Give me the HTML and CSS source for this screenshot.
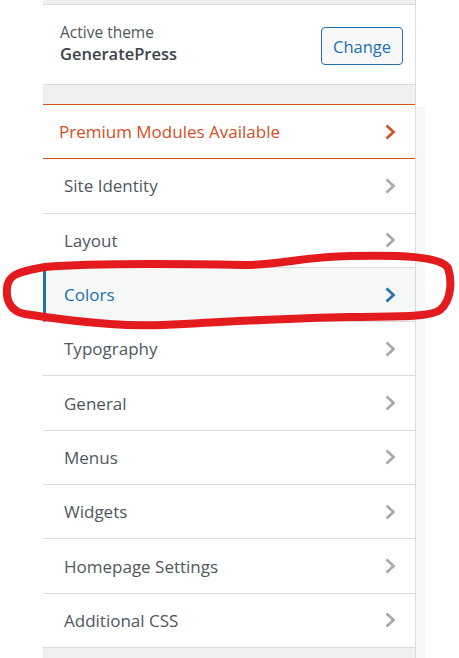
FILE: index.html
```html
<!DOCTYPE html>
<html>
<head>
<meta charset="utf-8">
<link rel="stylesheet" href="styles.css">
</head>
<body>
<div class="wrap">
  <div class="panel">
    <div class="top-gap"></div>
    <div class="theme-info">
      <div class="theme-text">
        <div class="theme-label">Active theme</div>
        <div class="theme-name">GeneratePress</div>
      </div>
      <button class="change-btn">Change</button>
    </div>
    <div class="gap"></div>
    <ul class="sections">
      <li class="row premium"><span>Premium Modules Available</span><svg class="chev" viewBox="0 0 10 16"><path d="M1.5 1.5 L8.5 8 L1.5 14.5"/></svg></li>
      <li class="row"><span>Site Identity</span><svg class="chev" viewBox="0 0 10 16"><path d="M1.5 1.5 L8.5 8 L1.5 14.5"/></svg></li>
      <li class="row"><span>Layout</span><svg class="chev" viewBox="0 0 10 16"><path d="M1.5 1.5 L8.5 8 L1.5 14.5"/></svg></li>
      <li class="row active"><span>Colors</span><svg class="chev" viewBox="0 0 10 16"><path d="M1.5 1.5 L8.5 8 L1.5 14.5"/></svg></li>
      <li class="row"><span>Typography</span><svg class="chev" viewBox="0 0 10 16"><path d="M1.5 1.5 L8.5 8 L1.5 14.5"/></svg></li>
      <li class="row"><span>General</span><svg class="chev" viewBox="0 0 10 16"><path d="M1.5 1.5 L8.5 8 L1.5 14.5"/></svg></li>
      <li class="row"><span>Menus</span><svg class="chev" viewBox="0 0 10 16"><path d="M1.5 1.5 L8.5 8 L1.5 14.5"/></svg></li>
      <li class="row"><span>Widgets</span><svg class="chev" viewBox="0 0 10 16"><path d="M1.5 1.5 L8.5 8 L1.5 14.5"/></svg></li>
      <li class="row"><span>Homepage Settings</span><svg class="chev" viewBox="0 0 10 16"><path d="M1.5 1.5 L8.5 8 L1.5 14.5"/></svg></li>
      <li class="row"><span>Additional CSS</span><svg class="chev" viewBox="0 0 10 16"><path d="M1.5 1.5 L8.5 8 L1.5 14.5"/></svg></li>
    </ul>
  </div>
  <div class="strip"></div>
</div>
<svg class="annotation" viewBox="0 0 459 658" width="459" height="658">
  <path d="M45 267 C90 263 190 264 245 265 C280 265 300 257 350 256 C400 255 440 256 448 268 C452 280 452 300 440 310 C430 318 390 316 350 317 C300 318 260 320 220 322 C180 324 150 327 110 324 C80 322 50 318 25 314 C10 311 6 300 7 288 C8 276 15 272 45 267 Z"/>
</svg>
</body>
</html>
```
FILE: styles.css
```css
html, body {
  margin: 0;
  padding: 0;
  background: #fff;
  font-family: "Open Sans", "Noto Sans", sans-serif;
}
body {
  position: relative;
  width: 459px;
  height: 658px;
  overflow: hidden;
}
.wrap {
  display: flex;
  padding-left: 43px;
  height: 658px;
}
.panel {
  width: 372px;
  border-right: 1px solid #dcdcde;
  background: #f0f0f1;
  display: flex;
  flex-direction: column;
}
.strip {
  width: 9px;
  margin-top: 107px;
  background: #f6f7f8;
}
.top-gap {
  height: 4px;
  border-bottom: 1px solid #dcdcde;
}
.theme-info {
  height: 79px;
  background: #fff;
  border-bottom: 1px solid #dcdcde;
  display: flex;
  align-items: center;
  justify-content: space-between;
  padding: 0 12px 0 17px;
}
.theme-text {
  display: flex;
  flex-direction: column;
  margin-top: -2px;
}
.theme-label {
  font-size: 15.5px;
  line-height: 20px;
  color: #50575e;
}
.theme-name {
  font-size: 16.5px;
  line-height: 23px;
  font-weight: 600;
  color: #3c434a;
}
.change-btn {
  width: 82px;
  height: 38px;
  margin-top: 3px;
  border: 1px solid #2271b1;
  border-radius: 4px;
  background: #f6f7f7;
  color: #2271b1;
  font-family: inherit;
  font-size: 16.5px;
  padding: 0;
}
.gap {
  height: 19px;
}
.sections {
  list-style: none;
  margin: 0;
  padding: 0;
  border-top: 1px solid #d9531e;
}
.row {
  height: 53.3px;
  box-sizing: content-box;
  background: #fff;
  border-bottom: 1px solid #dcdcde;
  display: flex;
  align-items: center;
  justify-content: space-between;
  padding: 0 20px 0 21px;
  font-size: 17px;
  font-weight: 500;
  color: #50575e;
}
.chev {
  width: 10px;
  height: 16px;
  fill: none;
  stroke: #a7aaad;
  stroke-width: 2.6;
}
.premium {
  padding-left: 16px;
  color: #d54e21;
  border-bottom-color: #d9531e;
}
.premium .chev {
  stroke: #d54e21;
}
.active {
  background: #f6f7f7;
  color: #2271b1;
  border-left: 3px solid #2271b1;
  padding-left: 18px;
}
.active .chev {
  stroke: #2271b1;
}
.annotation {
  position: absolute;
  left: 0;
  top: 0;
  pointer-events: none;
}
.annotation path {
  fill: none;
  stroke: #e31b1e;
  stroke-width: 8;
  stroke-linejoin: round;
}
```
